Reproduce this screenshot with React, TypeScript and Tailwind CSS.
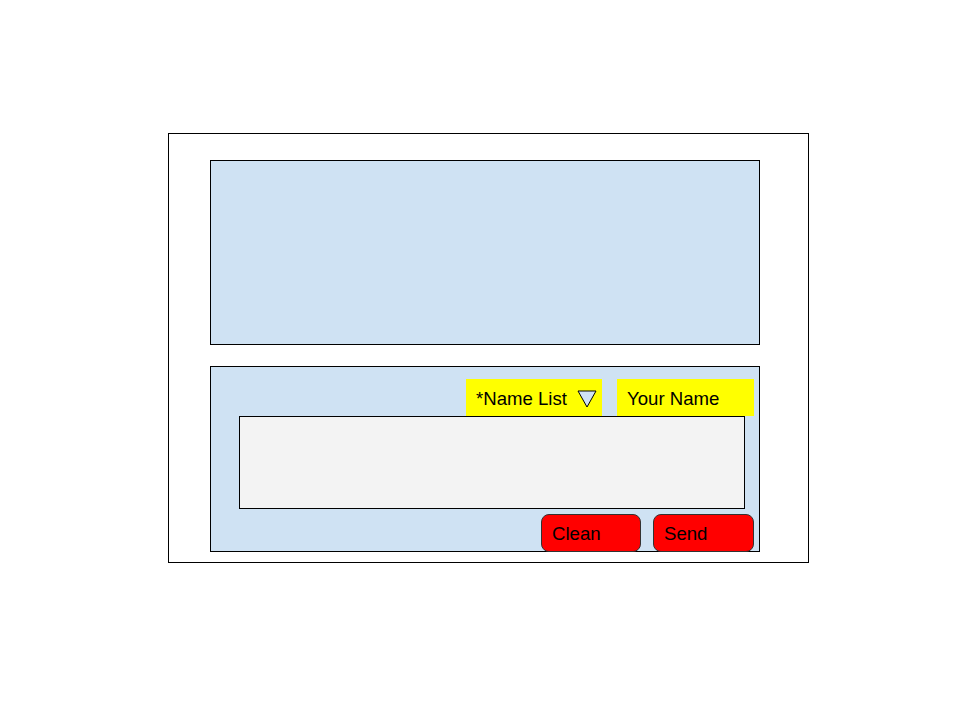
const App = () => {
  return (
    <div className="h-[720px] w-[960px] bg-white pl-[168px] pt-[133px] font-['Liberation_Sans',Arial,sans-serif] text-black">
      <div className="box-border h-[430px] w-[641px] border border-black pl-[41px] pt-[26px]">
        {/* message area */}
        <div className="box-border h-[185px] w-[550px] border border-black bg-[#cfe2f3]" />

        {/* compose area */}
        <div className="mt-[21px] box-border flex h-[186px] w-[550px] flex-col border border-black bg-[#cfe2f3] pt-[12px]">
          <div className="flex shrink-0 justify-end gap-[15px] pr-[5px]">
            <div className="flex h-[37px] w-[136px] items-center justify-between bg-[#ffff00] pl-[10px] pr-[5px] pt-[3px] text-[18.6px]">
              <span>*Name List</span>
              <svg width="20" height="18" viewBox="0 0 20 18">
                <path d="M1 1 L19 1 L10 17 Z" fill="#cfe2f3" stroke="#000" strokeWidth="1" strokeLinejoin="miter" />
              </svg>
            </div>
            <div className="flex h-[37px] w-[137px] items-center bg-[#ffff00] pl-[10px] pt-[3px] text-[18.6px]">
              Your Name
            </div>
          </div>

          <div className="ml-[28px] box-border h-[93px] w-[506px] shrink-0 border border-black bg-[#f3f3f3]" />

          <div className="mt-[5px] flex shrink-0 justify-end gap-[12px] pr-[5px]">
            <button className="box-border flex h-[38px] w-[100px] items-center rounded-lg border border-[#333] bg-[#ff0000] pl-[10px] pt-[2px] text-[18.6px]">
              Clean
            </button>
            <button className="box-border flex h-[38px] w-[101px] items-center rounded-lg border border-[#333] bg-[#ff0000] pl-[10px] pt-[2px] text-[18.6px]">
              Send
            </button>
          </div>
        </div>
      </div>
    </div>
  );
};

export default App;
